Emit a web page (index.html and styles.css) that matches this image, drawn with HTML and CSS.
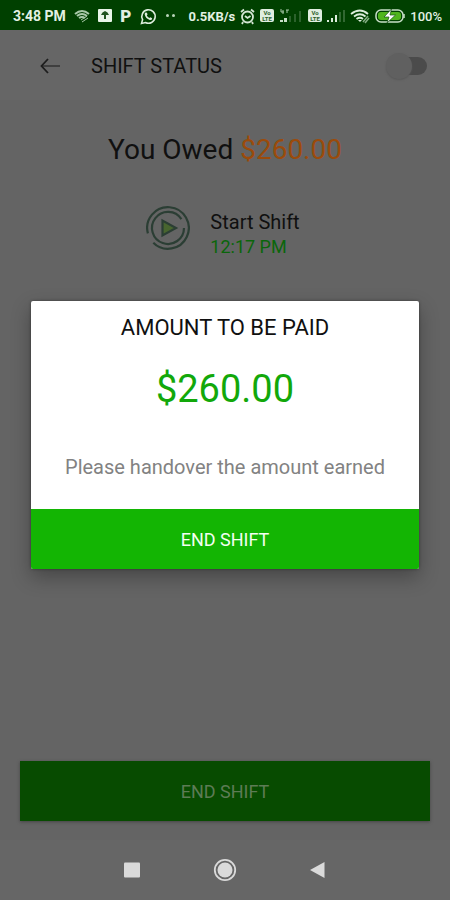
FILE: index.html
```html
<!DOCTYPE html>
<html lang="en">
<head>
<meta charset="utf-8">
<meta name="viewport" content="width=device-width, initial-scale=1">
<title>Shift Status</title>
<link rel="stylesheet" href="styles.css">
</head>
<body>
<div class="screen">
  <div class="status-bar">
    <div class="status-group">
      <span class="clock">3:48 PM</span>
      <svg width="16" height="16" viewBox="0 0 16 16" fill="none" stroke="#a9c9a9" stroke-width="2"><path d="M1 6Q8 0 15 6M3 8Q8 4 13 8M5 10Q8 8 11 10"/><path d="M7 12L13 8M8 14L14 10" stroke-width="1"/></svg>
      <svg width="14" height="16" viewBox="0 0 14 16"><rect y="1" width="14" height="13" rx="1" fill="#e8f4e8"/><path d="M7 3Q10 4 11 7H8V11H6V7H3Q4 4 7 3Z" fill="#1d531d"/></svg>
      <span class="app-letter">P</span>
      <svg width="17" height="17" viewBox="0 0 17 17"><path d="M1.500 15.500L2.600 11.700A6.700 6.700 0 1 1 5.500 14.500Z" fill="none" stroke="#dcecdc" stroke-width="1.600"/><path d="M5.500 4.500L7 4.700 7.500 6.600 6.800 7.500Q7.700 9.200 9.400 10L10.300 9.200 12.200 10.200Q12 12.400 9.800 12 5.600 10.500 4.700 6.500 4.600 5.200 5.500 4.500Z" fill="#dcecdc"/></svg>
      <svg width="12" height="16" viewBox="0 0 12 16" fill="#b9d4b9"><circle cx="2.500" cy="7.500" r="1.500"/><circle cx="8.500" cy="7.500" r="1.500"/></svg>
    </div>
    <div class="status-group">
      <span class="speed">0.5KB/s</span>
      <svg width="15" height="17" viewBox="0 0 15 17" fill="none" stroke="#d4e6d4" stroke-width="1.800"><circle cx="7.500" cy="9" r="5.500"/><path d="M1 4L4 1.500M14 4L11 1.500M5 8L7.500 10 10.500 8M3 14L2 16M12 14L13 16"/></svg>
      <svg class="volte" width="14" height="16" viewBox="0 0 14 16"><rect y="1" width="14" height="13" rx="2" fill="#e0eee0"/><text x="7" y="7">Vo</text><text x="7" y="13">LTE</text></svg>
      <svg width="24" height="16" viewBox="0 0 24 16"><path d="M2 1V4H5M4 2V6M7 2H10M8 2V5" fill="none" stroke="#a8c7a8" stroke-width="1"/><path d="M1 12H4V14H1ZM5 10H8V14H5Z" fill="#c9dfc9"/><path d="M10 8H12V14H10ZM15 6H17V14H15ZM20 3H22V14H20Z" fill="#2c622c"/></svg>
      <svg class="volte" width="14" height="16" viewBox="0 0 14 16"><rect y="1" width="14" height="13" rx="2" fill="#e0eee0"/><text x="7" y="7">Vo</text><text x="7" y="13">LTE</text></svg>
      <svg width="18" height="16" viewBox="0 0 18 16"><path d="M0 12H2V14H0ZM4 10H6V14H4ZM8 7H10V14H8Z" fill="#dcecdc"/><path d="M12 4H14V14H12ZM16 2H18V14H16Z" fill="#326832"/></svg>
      <svg width="20" height="16" viewBox="0 0 20 16" fill="none" stroke="#dcecdc" stroke-width="1.800"><path d="M1 6Q10 -1 18 6M4 8.500Q10 4 15.500 8.500M6.500 11Q10 8.500 13 11"/><path d="M8 12H12L10 14Z" fill="#dcecdc" stroke="none"/><path d="M13 14L18 8M15 15L19 10" stroke="#83ad83" stroke-width="1.500"/></svg>
      <svg width="30" height="16" viewBox="0 0 30 16"><rect x="1" y="2" width="27" height="12" rx="5" fill="none" stroke="#c8dfc8" stroke-width="1.500"/><rect x="3" y="4" width="23" height="8" rx="3" fill="#50b51d"/><path d="M29 6V10" stroke="#c8dfc8" stroke-width="1.500"/><path d="M16.500 1L9 9H14L12 15 20.500 7H15Z" fill="#fff" stroke="#155015" stroke-width=".7"/></svg>
      <span class="charge">100%</span>
    </div>
  </div>

  <main class="app">
    <header class="toolbar">
      <button class="back" type="button" aria-label="Back"><svg width="22" height="18" viewBox="0 0 22 18" fill="none" stroke-width="1.800"><path d="M2 9H20" stroke="#3c3c3c"/><path d="M8 2L1.500 9L8 16" stroke="#1d1d1d"/></svg></button>
      <h1 class="title">SHIFT STATUS</h1>
      <input class="switch" type="checkbox" role="switch" aria-label="Shift active">
    </header>
    <p class="owed">You Owed <span class="owed-amount">$260.00</span></p>
    <section class="shift">
      <svg width="44" height="44" viewBox="0 0 44 44" fill="none" stroke="#2b3e34" stroke-width="2.200"><path d="M1.900 27.400A20.800 20.800 0 1 1 7.300 36.700"/><path d="M35.400 13.200A16 16 0 1 0 38 22"/><path d="M16.500 14.500V29.500L30 22Z" fill="#48652f"/></svg>
      <div>
        <h2 class="shift-name">Start Shift</h2>
        <p class="shift-time">12:17 PM</p>
      </div>
    </section>
    <button class="end-shift" type="button">END SHIFT</button>

    <div class="overlay">
      <div class="dialog" role="dialog" aria-modal="true" aria-labelledby="dialog-title">
        <h2 class="dialog-title" id="dialog-title">AMOUNT TO BE PAID</h2>
        <p class="dialog-amount">$260.00</p>
        <p class="dialog-note">Please handover the amount earned</p>
        <button class="dialog-action" type="button">END SHIFT</button>
      </div>
    </div>
  </main>

  <nav class="system-nav" aria-label="System">
    <button type="button" aria-label="Recent apps"><svg width="24" height="24" viewBox="0 0 24 24"><rect x="4" y="4.500" width="16" height="15" rx="1" fill="#dadada"/></svg></button>
    <button type="button" aria-label="Home"><svg width="24" height="24" viewBox="0 0 24 24"><circle cx="12" cy="12" r="10.200" fill="none" stroke="#dadada" stroke-width="1.800"/><circle cx="12" cy="12" r="7.500" fill="#dadada"/></svg></button>
    <button type="button" aria-label="Back to previous screen"><svg width="24" height="24" viewBox="0 0 24 24"><path d="M18.500 4V20L4 12Z" fill="#dadada"/></svg></button>
  </nav>
</div>
</body>
</html>
```
FILE: styles.css
```css
* {
  box-sizing: border-box;
}

body {
  margin: 0;
  background: #646464;
  color: #101010;
  font-family: Roboto, "Liberation Sans", sans-serif;
}

h1, h2, p {
  margin: 0;
  font-weight: 400;
}

button {
  border: 0;
  padding: 0;
  background: none;
  color: inherit;
  font: inherit;
}

svg {
  display: block;
  flex: none;
}

.screen {
  display: flex;
  flex-direction: column;
  min-height: 100vh;
}

.status-bar {
  display: flex;
  justify-content: space-between;
  align-items: center;
  height: 30px;
  padding: 2px 8px 0 13px;
  background: #004000;
  color: #e3f0e3;
  font-size: 13px;
  font-weight: 700;
  white-space: nowrap;
}

.status-group {
  display: flex;
  align-items: center;
  gap: 8px;
}

.status-group + .status-group {
  gap: 5px;
}

.clock {
  font-size: 14px;
}

.app-letter {
  width: 12px;
  font-size: 17px;
  font-weight: 900;
  line-height: 16px;
  text-align: center;
}

.volte text {
  fill: #2b612b;
  font-size: 6px;
  font-weight: 700;
  text-anchor: middle;
}

.charge {
  font-weight: 500;
}

.app {
  position: relative;
  display: flex;
  flex: 1;
  flex-direction: column;
}

.toolbar {
  display: flex;
  align-items: center;
  height: 70px;
  padding: 2px 23px 0 40px;
  background: #666;
}

.back {
  margin-right: 29px;
}

.title {
  flex: 1;
  font-size: 20px;
  line-height: 24px;
}

.switch {
  display: flex;
  align-items: center;
  appearance: none;
  width: 36px;
  height: 18px;
  margin: 0;
  border-radius: 9px;
  background: #4b4b4b;
}

.switch::before {
  content: "";
  flex: none;
  width: 26px;
  height: 26px;
  margin-left: -5px;
  border-radius: 50%;
  background: #606060;
  box-shadow: 0 1px 2px #585858;
}

.owed {
  margin-top: 32px;
  font-size: 28px;
  line-height: 36px;
  text-align: center;
}

.owed-amount {
  color: #9b4b0b;
}

.shift {
  display: flex;
  justify-content: center;
  gap: 20px;
  margin-top: 38px;
  padding-right: 4px;
}

.shift-name {
  padding-top: 4px;
  font-size: 20px;
  line-height: 24px;
}

.shift-time {
  color: #0a660a;
  font-size: 18px;
  line-height: 26px;
}

.end-shift {
  height: 60px;
  margin: auto 20px 19px;
  background: #074b00;
  box-shadow: 0 1px 3px #444;
  color: #5d7b55;
  font-size: 18px;
}

.overlay {
  position: absolute;
  inset: 0;
  display: flex;
  align-items: center;
  justify-content: center;
  padding: 0 31px;
}

.dialog {
  flex: 1;
  overflow: hidden;
  border-radius: 2px;
  background: #fff;
  box-shadow: 0 8px 20px rgba(0, 0, 0, .3), 0 0 3px rgba(0, 0, 0, .4);
  text-align: center;
}

.dialog-title {
  padding-top: 12px;
  font-size: 22px;
  line-height: 30px;
}

.dialog-amount {
  margin-top: 22px;
  color: #12a80a;
  font-size: 38px;
  line-height: 48px;
}

.dialog-note {
  margin: 42px 0 30px;
  color: #828282;
  font-size: 20px;
  line-height: 24px;
}

.dialog-action {
  display: block;
  width: 100%;
  height: 60px;
  background: #13b503;
  color: #f3fff1;
  font-size: 18px;
}

.system-nav {
  display: flex;
  justify-content: center;
  align-items: center;
  gap: 69px;
  height: 60px;
  background: #666;
}
```
